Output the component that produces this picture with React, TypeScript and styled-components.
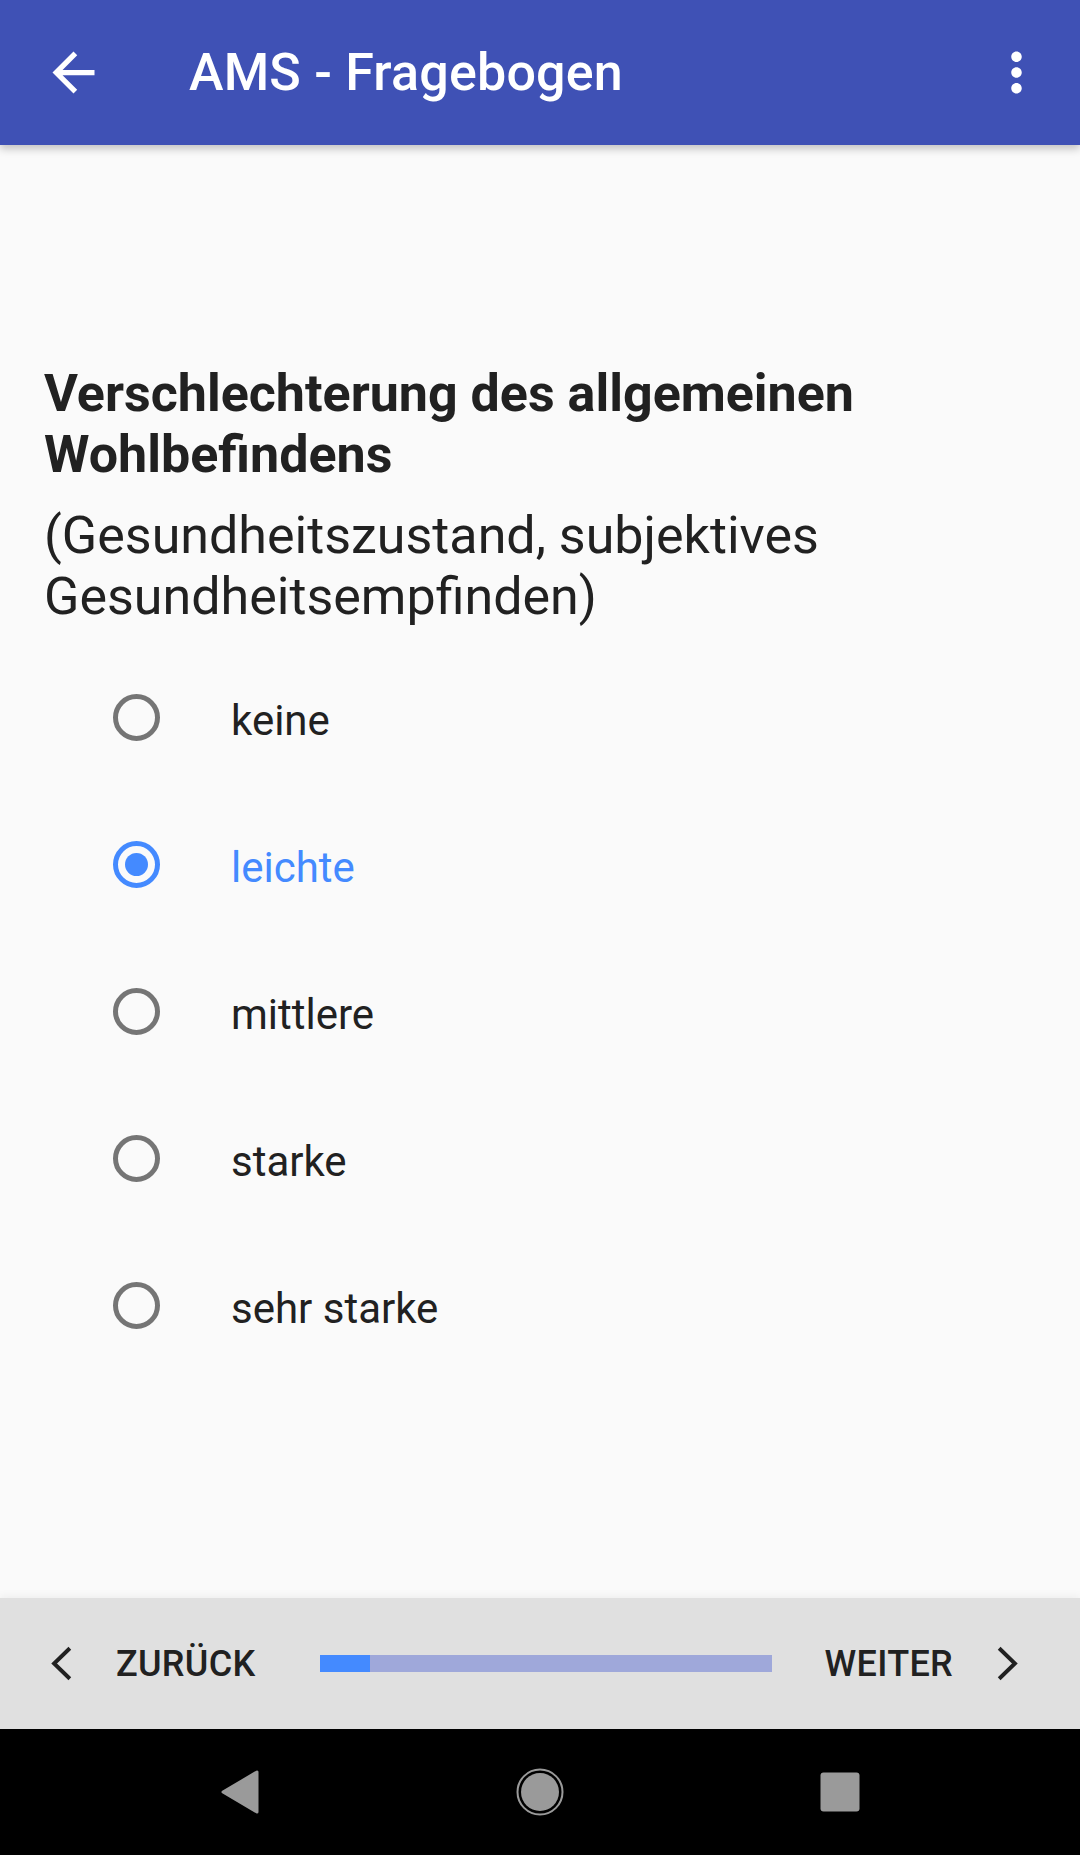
import React, { useState } from "react";
import styled, { createGlobalStyle } from "styled-components";

const Global = createGlobalStyle`
  html, body { margin: 0; padding: 0; background: #fafafa; }
  body { font-family: Roboto, "Noto Sans", "Liberation Sans", sans-serif; }
  * { box-sizing: border-box; }
`;

const Screen = styled.div`
  width: 1080px;
  height: 1855px;
  display: flex;
  flex-direction: column;
  background: #fafafa;
  overflow: hidden;
`;

const AppBar = styled.header`
  height: 145px;
  flex: none;
  background: #3f51b5;
  display: flex;
  align-items: center;
  padding: 0 32px 0 42px;
  box-shadow: 0 4px 8px rgba(0, 0, 0, 0.22);
  position: relative;
  z-index: 2;
`;

const IconBox = styled.span<{ $size?: number }>`
  width: ${(p) => p.$size ?? 63}px;
  height: ${(p) => p.$size ?? 63}px;
  display: inline-flex;
  align-items: center;
  justify-content: center;
  flex: none;
  svg { width: 100%; height: 100%; display: block; }
`;

const Title = styled.h1`
  margin: 0 0 0 84px;
  flex: 1;
  color: #fff;
  font-size: 52px;
  font-weight: 500;
  letter-spacing: 0.2px;
`;

const Content = styled.main`
  flex: 1;
  padding: 218px 44px 0 44px;
`;

const Heading = styled.h2`
  margin: 0;
  font-size: 52px;
  line-height: 61px;
  font-weight: 700;
  color: #212121;
`;

const Sub = styled.p`
  margin: 20px 0 0 0;
  font-size: 52px;
  line-height: 61px;
  font-weight: 400;
  color: #212121;
`;

const Options = styled.div`
  margin-top: 17px;
  display: flex;
  flex-direction: column;
`;

const Option = styled.label`
  height: 147px;
  display: flex;
  align-items: center;
  padding-left: 69px;
  cursor: pointer;
`;

const Radio = styled.span<{ $on: boolean }>`
  width: 47px;
  height: 47px;
  border-radius: 50%;
  border: 5px solid ${(p) => (p.$on ? "#448aff" : "#757575")};
  display: flex;
  align-items: center;
  justify-content: center;
  flex: none;
  &::after {
    content: "";
    width: 23px;
    height: 23px;
    border-radius: 50%;
    background: #448aff;
    display: ${(p) => (p.$on ? "block" : "none")};
  }
`;

const OptionLabel = styled.span<{ $on: boolean }>`
  margin-left: 71px;
  font-size: 42px;
  color: ${(p) => (p.$on ? "#448aff" : "#212121")};
  padding-top: 6px;
`;

const BottomBar = styled.footer`
  height: 131px;
  flex: none;
  background: #e0e0e0;
  display: flex;
  align-items: center;
  padding: 0 42px 0 31px;
  box-shadow: 0 -2px 8px rgba(0, 0, 0, 0.05);
  position: relative;
`;

const NavButton = styled.button`
  border: 0;
  background: transparent;
  display: flex;
  align-items: center;
  gap: 22px;
  padding: 0;
  font-family: inherit;
  font-size: 36px;
  font-weight: 500;
  color: #212121;
  text-transform: uppercase;
  letter-spacing: 0.3px;
  cursor: pointer;
`;

const Progress = styled.div`
  flex: 1;
  height: 17px;
  margin: 0 53px 0 64px;
  background: #9fa8da;
  display: flex;
`;

const ProgressFill = styled.div`
  height: 100%;
  background: #448aff;
`;

const SystemNav = styled.nav`
  height: 126px;
  flex: none;
  background: #000;
  display: grid;
  grid-template-columns: repeat(3, 300px);
  justify-content: center;
  align-items: center;
  justify-items: center;
`;

const options = ["keine", "leichte", "mittlere", "starke", "sehr starke"];

export default function App() {
  const [selected, setSelected] = useState(1);
  const progress = 50 / 451;
  return (
    <Screen>
      <Global />
      <AppBar>
        <IconBox>
          <svg viewBox="0 0 24 24">
            <path fill="#fff" d="M20 11H7.83l5.59-5.59L12 4l-8 8 8 8 1.41-1.41L7.83 13H20v-2z" />
          </svg>
        </IconBox>
        <Title>AMS - Fragebogen</Title>
        <IconBox>
          <svg viewBox="0 0 24 24">
            <path
              fill="#fff"
              d="M12 8c1.1 0 2-.9 2-2s-.9-2-2-2-2 .9-2 2 .9 2 2 2zm0 2c-1.1 0-2 .9-2 2s.9 2 2 2 2-.9 2-2-.9-2-2-2zm0 6c-1.1 0-2 .9-2 2s.9 2 2 2 2-.9 2-2-.9-2-2-2z"
            />
          </svg>
        </IconBox>
      </AppBar>
      <Content>
        <Heading>Verschlechterung des allgemeinen Wohlbefindens</Heading>
        <Sub>(Gesundheitszustand, subjektives Gesundheitsempfinden)</Sub>
        <Options>
          {options.map((o, i) => (
            <Option key={o} onClick={() => setSelected(i)}>
              <Radio $on={i === selected} />
              <OptionLabel $on={i === selected}>{o}</OptionLabel>
            </Option>
          ))}
        </Options>
      </Content>
      <BottomBar>
        <NavButton>
          <IconBox>
            <svg viewBox="0 0 24 24">
              <polyline points="14.8,6.2 8.8,12 14.8,17.8" fill="none" stroke="#212121" strokeWidth="1.5" strokeLinejoin="miter" />
            </svg>
          </IconBox>
          Zurück
        </NavButton>
        <Progress>
          <ProgressFill style={{ width: `${progress * 100}%` }} />
        </Progress>
        <NavButton>
          Weiter
          <IconBox>
            <svg viewBox="0 0 24 24">
              <polyline points="9.2,6.2 15.2,12 9.2,17.8" fill="none" stroke="#212121" strokeWidth="1.5" strokeLinejoin="miter" />
            </svg>
          </IconBox>
        </NavButton>
      </BottomBar>
      <SystemNav>
        <svg width="40" height="44" viewBox="0 0 40 44">
          <path d="M37 2 L37 42 L3 22 Z" fill="#9a9a9a" stroke="#9a9a9a" strokeWidth="3" strokeLinejoin="round" />
        </svg>
        <svg width="50" height="50" viewBox="0 0 50 50">
          <circle cx="25" cy="25" r="22.5" fill="none" stroke="#9a9a9a" strokeWidth="2" />
          <circle cx="25" cy="25" r="19" fill="#9a9a9a" />
        </svg>
        <svg width="40" height="40" viewBox="0 0 40 40">
          <rect x="0.5" y="0.5" width="39" height="39" rx="3" fill="#9a9a9a" />
        </svg>
      </SystemNav>
    </Screen>
  );
}
